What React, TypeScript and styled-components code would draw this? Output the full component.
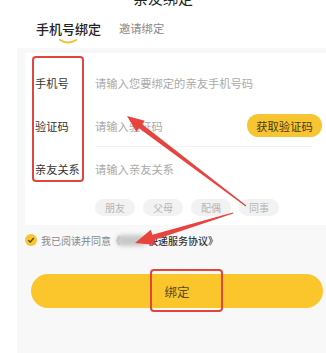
import styled, { createGlobalStyle } from "styled-components";

const GlobalStyle = createGlobalStyle`
  html, body {
    margin: 0;
    padding: 0;
    background: #fff;
  }
  body {
    font-family: "Noto Sans CJK SC", "Noto Sans", sans-serif;
    overflow: hidden;
  }
`;

const Page = styled.div`
  position: relative;
  width: 326px;
  height: 353px;
  overflow: hidden;
  background: #fff;
`;

const Header = styled.div`
  position: relative;
  height: 20px;
  margin-top: -13px;
  display: flex;
  align-items: center;
  justify-content: center;
  font-size: 15px;
  color: #222;
`;

const Back = styled.span`
  position: absolute;
  left: 27px;
  top: 2px;
  width: 8px;
  height: 8px;
  border-left: 1.5px solid #333;
  border-bottom: 1.5px solid #333;
  transform: rotate(45deg);
`;

const Tabs = styled.div`
  display: flex;
  align-items: flex-end;
  gap: 18px;
  padding: 11px 0 0 36px;
  height: 37px;
  box-sizing: border-box;
`;

const Tab = styled.div<{ $active?: boolean }>`
  position: relative;
  font-size: ${(p) => (p.$active ? "13px" : "11.3px")};
  font-weight: ${(p) => (p.$active ? 500 : 400)};
  color: ${(p) => (p.$active ? "#222" : "#888")};
  line-height: 18px;
  margin-bottom: ${(p) => (p.$active ? "6px" : "7px")};
`;

const Smile = styled.svg`
  position: absolute;
  left: 23px;
  top: 19px;
`;

const Panel = styled.div`
  margin-left: 17px;
  margin-top: 4px;
  background: #f8f8f8;
  padding: 5px 0 0 8px;
  height: 320px;
`;

const Card = styled.div`
  background: #fff;
  padding: 8px 0 9px 10px;
`;

const Row = styled.div<{ $line?: boolean }>`
  display: flex;
  align-items: center;
  height: 43px;
  position: relative;
  &::after {
    content: "";
    display: ${(p) => (p.$line ? "block" : "none")};
    position: absolute;
    left: 60px;
    right: 13px;
    bottom: 0;
    height: 1px;
    background: #f1f1f1;
  }
`;

const Label = styled.div`
  width: 60px;
  font-size: 11.2px;
  color: #333;
  white-space: nowrap;
`;

const Placeholder = styled.div`
  flex: 1;
  font-size: 11.3px;
  color: #aaa;
  white-space: nowrap;
`;

const CodeButton = styled.div`
  width: 75px;
  height: 23px;
  border-radius: 12px;
  background: #f7c531;
  color: #4a3a10;
  font-size: 11.3px;
  display: flex;
  align-items: center;
  justify-content: center;
  margin-right: 4px;
`;

const Chips = styled.div`
  display: flex;
  gap: 8px;
  padding: 9px 0 0 60px;
`;

const Chip = styled.div`
  width: 40px;
  height: 17px;
  border-radius: 9px;
  background: #f2f2f2;
  color: #b5b5b5;
  font-size: 10px;
  display: flex;
  align-items: center;
  justify-content: center;
`;

const Agree = styled.div`
  display: flex;
  align-items: center;
  height: 30px;
  font-size: 10px;
  color: #888;
`;

const Check = styled.div`
  width: 12px;
  height: 12px;
  border-radius: 50%;
  background: #f7c531;
  display: flex;
  align-items: center;
  justify-content: center;
  margin-right: 4px;
`;

const Blur = styled.span`
  display: inline-block;
  width: 30px;
  height: 11px;
  margin: 0 1px 0 -4px;
  border-radius: 5px;
  background: #c8c8c8;
  filter: blur(2px);
`;

const Link = styled.span`
  color: #333;
  font-weight: 500;
`;

const Submit = styled.div`
  margin: 19px 3px 0 6px;
  height: 34px;
  border-radius: 17px;
  background: #fac62b;
  color: #5a4a1a;
  font-size: 12.5px;
  display: flex;
  align-items: center;
  justify-content: center;
`;

const Overlay = styled.svg`
  position: absolute;
  left: 0;
  top: 0;
  pointer-events: none;
`;

const RedBox = styled.div<{ $x: number; $y: number; $w: number; $h: number }>`
  position: absolute;
  left: ${(p) => p.$x}px;
  top: ${(p) => p.$y}px;
  width: ${(p) => p.$w}px;
  height: ${(p) => p.$h}px;
  border: 2.5px solid #e3443d;
  border-radius: 4px;
  box-sizing: border-box;
`;

function arrowPoints(
  tx: number,
  ty: number,
  hx: number,
  hy: number,
  headLen: number,
  headW: number,
  neckW: number
) {
  const dx = hx - tx;
  const dy = hy - ty;
  const len = Math.hypot(dx, dy);
  const ux = dx / len;
  const uy = dy / len;
  const nx = -uy;
  const ny = ux;
  const bx = hx - ux * headLen;
  const by = hy - uy * headLen;
  const pts = [
    [tx + nx * 0.6, ty + ny * 0.6],
    [bx + nx * neckW, by + ny * neckW],
    [bx + nx * headW, by + ny * headW],
    [hx, hy],
    [bx - nx * headW, by - ny * headW],
    [bx - nx * neckW, by - ny * neckW],
    [tx - nx * 0.6, ty - ny * 0.6],
  ];
  return pts.map((p) => p.join(",")).join(" ");
}

export default function App() {
  return (
    <Page>
      <GlobalStyle />
      <Header>
        <Back />
        亲友绑定
      </Header>
      <Tabs>
        <Tab $active>
          手机号绑定
          <Smile width="18" height="5" viewBox="0 0 18 5">
            <path
              d="M1 1 Q9 6 17 1"
              stroke="#f5c02a"
              strokeWidth="2"
              fill="none"
              strokeLinecap="round"
            />
          </Smile>
        </Tab>
        <Tab>邀请绑定</Tab>
      </Tabs>
      <Panel>
        <Card>
          <Row>
            <Label>手机号</Label>
            <Placeholder>请输入您要绑定的亲友手机号码</Placeholder>
          </Row>
          <Row $line>
            <Label>验证码</Label>
            <Placeholder>请输入验证码</Placeholder>
            <CodeButton>获取验证码</CodeButton>
          </Row>
          <Row>
            <Label>亲友关系</Label>
            <Placeholder>请输入亲友关系</Placeholder>
          </Row>
          <Chips>
            {["朋友", "父母", "配偶", "同事"].map((c) => (
              <Chip key={c}>{c}</Chip>
            ))}
          </Chips>
        </Card>
        <Agree>
          <Check>
            <svg width="8" height="8" viewBox="0 0 8 8">
              <path
                d="M1.3 4.2 L3.3 6 L6.8 2"
                stroke="#5a4410"
                strokeWidth="1.3"
                fill="none"
              />
            </svg>
          </Check>
          我已阅读并同意《
          <Blur />
          <Link>快递服务协议》</Link>
        </Agree>
        <Submit>绑定</Submit>
      </Panel>
      <RedBox $x={32} $y={56} $w={52} $h={126} />
      <RedBox $x={150} $y={269} $w={73} $h={43} />
      <Overlay width="326" height="353" viewBox="0 0 326 353">
        <polygon
          points={arrowPoints(246, 206, 127, 116, 17, 7, 2.6)}
          fill="#e8433c"
        />
        <polygon
          points={arrowPoints(233, 213, 135, 243, 19, 8, 2.8)}
          fill="#e8433c"
        />
      </Overlay>
    </Page>
  );
}
